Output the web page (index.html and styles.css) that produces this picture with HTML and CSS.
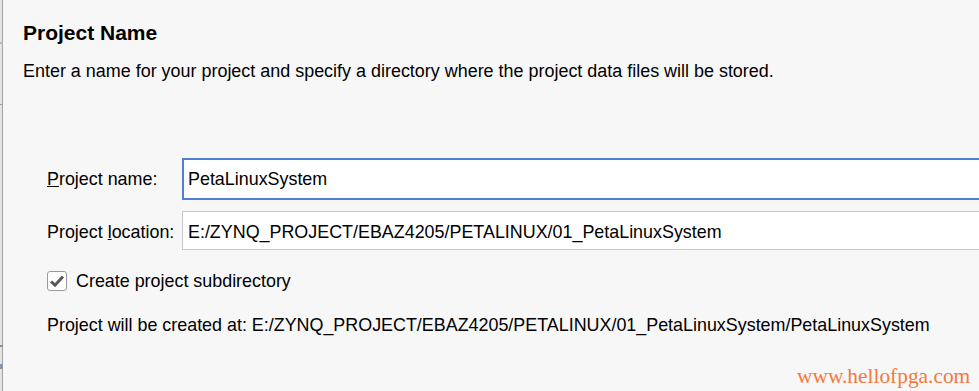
FILE: index.html
```html
<!DOCTYPE html>
<html>
<head>
<meta charset="utf-8">
<link rel="stylesheet" href="styles.css">
</head>
<body>
<div class="window">
  <div class="edge">
    <span class="tick t1"></span>
    <span class="tick t2"></span>
    <span class="tick t3"></span>
    <span class="tick t4"></span>
  </div>
  <main class="page">
    <h1 class="title">Project Name</h1>
    <p class="desc">Enter a name for your project and specify a directory where the project data files will be stored.</p>
    <div class="form">
      <div class="row">
        <label class="label"><u>P</u>roject name:</label>
        <div class="field focused">PetaLinuxSystem</div>
      </div>
      <div class="row second">
        <label class="label">Project <u>l</u>ocation:</label>
        <div class="field">E:/ZYNQ_PROJECT/EBAZ4205/PETALINUX/01_PetaLinuxSystem</div>
      </div>
      <div class="check">
        <span class="box">
          <svg width="16" height="14" viewBox="0 0 16 14"><path d="M2 7.5 L6 11.2 L14 2.5" fill="none" stroke="#575757" stroke-width="3"/></svg>
        </span>
        <span>Create project subdirectory</span>
      </div>
      <p class="created">Project will be created at: E:/ZYNQ_PROJECT/EBAZ4205/PETALINUX/01_PetaLinuxSystem/PetaLinuxSystem</p>
    </div>
    <div class="mark">www.hellofpga.com</div>
  </main>
</div>
</body>
</html>
```
FILE: styles.css
```css
html, body {
  margin: 0;
  padding: 0;
  width: 979px;
  height: 391px;
  overflow: hidden;
  background: #f7f7f7;
}
.window {
  display: flex;
  height: 391px;
  font-family: "Liberation Sans", Arial, sans-serif;
  color: #000;
}
.edge {
  position: relative;
  width: 2px;
  background: #e3e3e3;
  border-right: 1px solid #a3a3a3;
  flex: none;
}
.tick {
  position: absolute;
  left: 0;
  width: 3px;
  height: 2px;
  background: #b8b8b8;
}
.t1 { top: 42px; }
.t2 { top: 104px; background: #9aa4b0; height: 1px; }
.t3 { top: 345px; background: #909090; }
.t4 { top: 364px; height: 5px; background: #8a96a6; }
.page {
  position: relative;
  flex: 1;
  padding-left: 20px;
  min-width: 0;
}
.title {
  margin: 0;
  padding-top: 21px;
  font-size: 21px;
  font-weight: bold;
  line-height: 24px;
}
.desc {
  margin: 16px 0 0;
  font-size: 17.95px;
  line-height: 20px;
}
.form {
  margin-top: 77px;
  padding-left: 24px;
  font-size: 17.9px;
  line-height: 20px;
}
.row {
  display: flex;
  align-items: center;
  height: 42px;
  margin-bottom: 11px;
}
.row.second {
  height: 39px;
  margin-bottom: 21px;
  padding-top: 3px;
  box-sizing: border-box;
}
.label {
  width: 135px;
  flex: none;
}
.field {
  flex: 1;
  box-sizing: border-box;
  height: 39px;
  background: #fff;
  border: 1px solid #c8c8c8;
  border-right: none;
  padding-left: 5px;
  display: flex;
  align-items: center;
}
.row.second .field {
  margin-top: -3px;
  padding-top: 3px;
}
.field.focused {
  height: 42px;
  border: 2px solid #4d7fd4;
  border-right: none;
  padding-left: 4px;
}
.check {
  display: flex;
  align-items: center;
  gap: 9px;
  height: 20px;
}
.box {
  box-sizing: border-box;
  width: 20px;
  height: 20px;
  border: 1px solid #9a9a9a;
  border-radius: 3px;
  background: #fff;
  display: flex;
  align-items: center;
  justify-content: center;
}
.created {
  margin: 24px 0 0;
}
.mark {
  position: absolute;
  left: 794px;
  top: 364px;
  font-family: "Liberation Serif", "Times New Roman", serif;
  font-size: 21.4px;
  line-height: 24px;
  color: #f47a3c;
}
```
